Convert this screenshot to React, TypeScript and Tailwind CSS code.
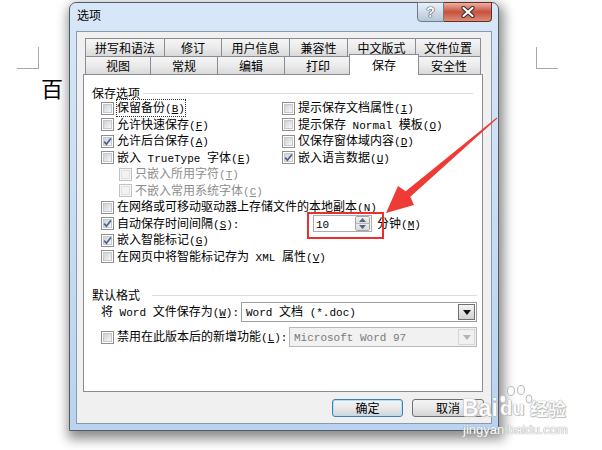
import React from 'react';

const TABS1 = [
  { label: '拼写和语法', w: 'w-[79px]' },
  { label: '修订', w: 'w-[57px]' },
  { label: '用户信息', w: 'w-[68px]' },
  { label: '兼容性', w: 'w-[58px]' },
  { label: '中文版式', w: 'w-[68px]' },
  { label: '文件位置', w: 'w-[66px]' },
];

const TABS2 = [
  { label: '视图', w: 'w-[65px]' },
  { label: '常规', w: 'w-[67px]' },
  { label: '编辑', w: 'w-[67px]' },
  { label: '打印', w: 'w-[67px]' },
  { label: '保存', w: 'w-[66px]', active: true },
  { label: '安全性', w: 'w-[64px]' },
];

// latin runs are monospace half-width in the original dialog font
const M = ({ children }: { children: React.ReactNode }) => (
  <span className="font-['Liberation_Mono',monospace] text-[11px]">{children}</span>
);

const K = ({ c }: { c: string }) => (
  <span className="font-['Liberation_Mono',monospace] text-[11px]">
    (<span className="underline underline-offset-[1px]">{c}</span>)
  </span>
);

function Box({ checked, disabled }: { checked?: boolean; disabled?: boolean }) {
  return (
    <span
      className={`relative flex h-[13px] w-[13px] shrink-0 items-center justify-center border ${
        disabled ? 'border-[#c2c2c2] bg-[#f7f7f7]' : 'border-[#8f8f8f] bg-white'
      }`}
    >
      <span
        className={`h-[9px] w-[9px] border ${
          disabled
            ? 'border-[#e0e0e0] bg-[#f2f2f2]'
            : 'border-[#c5c8cd] bg-linear-to-br from-[#cdd0d5] to-[#f7f7f7]'
        }`}
      />
      {checked && (
        <svg className="absolute inset-0" width="11" height="11" viewBox="0 0 11 11">
          <path d="M2.2 5.6 L4.4 8.2 L8.9 2.4" fill="none" stroke="#4a5e96" strokeWidth="1.7" />
        </svg>
      )}
    </span>
  );
}

function Row({ children }: { children: React.ReactNode }) {
  return <div className="flex h-[16.5px] items-center leading-[14px]">{children}</div>;
}

function Check({
  checked,
  disabled,
  children,
}: {
  checked?: boolean;
  disabled?: boolean;
  children: React.ReactNode;
}) {
  return (
    <div className={`flex items-center gap-[3px] ${disabled ? 'text-[#8d8d8d]' : ''}`}>
      <Box checked={checked} disabled={disabled} />
      <span className="whitespace-nowrap">{children}</span>
    </div>
  );
}

function GroupLabel({ text, line }: { text: string; line: string }) {
  return (
    <div className="flex h-[14px] items-center pl-[8px] leading-[14px]">
      <span>{text}</span>
      <span className={`h-px flex-1 bg-[#d5dfe5] ${line}`} />
    </div>
  );
}

function Spinner() {
  return (
    <div className="flex h-[17px] w-[59px] items-center border border-[#abadb3] bg-white pl-[2px] pr-[1px]">
      <span className="flex-1 leading-[14px]">
        <M>10</M>
      </span>
      <div className="flex h-[15px] w-[15px] flex-col overflow-hidden rounded-[2px] border border-[#a7a7a7]">
        <span className="flex flex-1 items-center justify-center border-b border-[#b9b9b9] bg-linear-to-b from-[#f3f3f3] to-[#dedede]">
          <svg width="7" height="4" viewBox="0 0 7 4">
            <path d="M0 4 L3.5 0 L7 4 Z" fill="#4f6589" />
          </svg>
        </span>
        <span className="flex flex-1 items-center justify-center bg-linear-to-b from-[#ececec] to-[#d8d8d8]">
          <svg width="7" height="4" viewBox="0 0 7 4">
            <path d="M0 0 L3.5 4 L7 0 Z" fill="#4f6589" />
          </svg>
        </span>
      </div>
    </div>
  );
}

function Select({ w, disabled, children }: { w: string; disabled?: boolean; children: React.ReactNode }) {
  return (
    <div
      className={`${w} flex h-[20px] items-center border p-[1px] leading-[14px] ${
        disabled ? 'border-[#b9b9b9] bg-[#f1f1f1] text-[#7a7a7a]' : 'border-[#9c9c9c] bg-white'
      }`}
    >
      <span className="flex-1 whitespace-nowrap pl-[3px]">{children}</span>
      <span
        className={`flex h-full w-[17px] items-center justify-center border ${
          disabled
            ? 'border-[#d6d6d6] bg-[#f1f1f1]'
            : 'border-[#707070] bg-linear-to-b from-[#f4f4f4] to-[#d2d2d2]'
        }`}
      >
        <svg width="8" height="5" viewBox="0 0 8 5">
          <path d="M0 0 L8 0 L4 5 Z" fill={disabled ? '#b4b4b4' : '#111'} />
        </svg>
      </span>
    </div>
  );
}

function Tab({ label, w, last, active }: { label: string; w: string; last?: boolean; active?: boolean }) {
  if (active) {
    return (
      <div className={`${w} relative h-[18px]`}>
        <div className="absolute -left-[2px] -right-[2px] -top-[2px] -bottom-[1px] z-10 flex items-center justify-center border-t border-l border-r border-[#898c95] bg-white leading-[14px]">
          {label}
        </div>
      </div>
    );
  }
  return (
    <div
      className={`${w} flex h-[18px] items-center justify-center border-t border-l border-[#898c95] bg-linear-to-b from-[#f5f5f5] via-[#ebebeb] to-[#d9d9d9] leading-[14px] ${
        last ? 'border-r' : ''
      }`}
    >
      {label}
    </div>
  );
}

function Dialog() {
  return (
    <div className="absolute left-[69px] top-[2px] flex h-[429px] w-[430px] flex-col rounded-t-[7px] border border-[#4f5b68] bg-linear-to-b from-[#d8e7f8] to-[#b9d3f0] px-[6px] pb-[6px] shadow-[2px_5px_12px_3px_rgba(0,0,0,0.45)]">
      {/* title bar */}
      <div className="flex h-[28px] items-start justify-between">
        <span className="mt-[5px] pl-[1px] leading-[14px]">选项</span>
        <div className="-mt-[1px] flex h-[20px]">
          <div className="flex w-[27px] items-center justify-center rounded-bl-[4px] border border-[#6d7c8e] bg-linear-to-b from-[#eaf0f6] via-[#d2dce8] to-[#b7c6d7] font-['Liberation_Sans',sans-serif] text-[14px] font-bold text-white [text-shadow:0_0_1px_#2f3a48,0_0_1px_#2f3a48,0_0_1px_#2f3a48]">
            ?
          </div>
          <div className="flex w-[48px] items-center justify-center rounded-br-[4px] border border-l-0 border-[#6a2b22] bg-linear-to-b from-[#eab0a2] via-[#c7503e] to-[#da8c79]">
            <svg width="14" height="12" viewBox="0 0 14 12">
              <path d="M2.5 2 L11.5 10 M11.5 2 L2.5 10" stroke="#3b2a28" strokeWidth="4.2" strokeLinecap="round" />
              <path d="M2.5 2 L11.5 10 M11.5 2 L2.5 10" stroke="#ffffff" strokeWidth="2.2" strokeLinecap="round" />
            </svg>
          </div>
        </div>
      </div>

      {/* client area */}
      <div className="flex h-[393px] flex-col border border-[#8b9aab] bg-[#f0f0f0] pl-[6px] pt-[6px]">
        <div className="ml-[2px] flex">
          {TABS1.map((t, i) => (
            <Tab key={t.label} label={t.label} w={t.w} last={i === TABS1.length - 1} />
          ))}
        </div>
        <div className="ml-[2px] flex">
          {TABS2.map((t, i) => (
            <Tab key={t.label} label={t.label} w={t.w} active={t.active} last={i === TABS2.length - 1} />
          ))}
        </div>

        <div className="relative flex h-[318px] w-[400px] flex-col border border-[#898c95] bg-white pt-[11px]">
          <GroupLabel text="保存选项" line="ml-[3px] mr-[9px]" />

          <div className="flex flex-col pl-[17px]">
            <Row>
              <div className="w-[181px]">
                <div className="flex items-center gap-[3px]">
                  <Box />
                  <span className="whitespace-nowrap outline-1 outline-dotted outline-[#333] outline-offset-0">
                    保留备份<K c="B" />
                  </span>
                </div>
              </div>
              <Check>
                提示保存文档属性<K c="I" />
              </Check>
            </Row>
            <Row>
              <div className="w-[181px]">
                <Check>
                  允许快速保存<K c="F" />
                </Check>
              </div>
              <Check>
                提示保存<M> Normal </M>模板<K c="O" />
              </Check>
            </Row>
            <Row>
              <div className="w-[181px]">
                <Check checked>
                  允许后台保存<K c="A" />
                </Check>
              </div>
              <Check>
                仅保存窗体域内容<K c="D" />
              </Check>
            </Row>
            <Row>
              <div className="w-[181px]">
                <Check>
                  嵌入<M> TrueType </M>字体<K c="E" />
                </Check>
              </div>
              <Check checked>
                嵌入语言数据<K c="U" />
              </Check>
            </Row>
            <Row>
              <div className="pl-[18px]">
                <Check disabled>
                  只嵌入所用字符<K c="T" />
                </Check>
              </div>
            </Row>
            <Row>
              <div className="pl-[18px]">
                <Check disabled>
                  不嵌入常用系统字体<K c="C" />
                </Check>
              </div>
            </Row>
            <Row>
              <Check>
                在网络或可移动驱动器上存储文件的本地副本<K c="N" />
              </Check>
            </Row>
            <Row>
              <Box checked />
              <span className="ml-[3px] w-[196px] whitespace-nowrap">
                自动保存时间间隔<K c="S" />
                <M>:</M>
              </span>
              <Spinner />
              <span className="ml-[5px] whitespace-nowrap">
                分钟<K c="M" />
              </span>
            </Row>
            <Row>
              <Check checked>
                嵌入智能标记<K c="G" />
              </Check>
            </Row>
            <Row>
              <Check>
                在网页中将智能标记存为<M> XML </M>属性<K c="V" />
              </Check>
            </Row>
          </div>

          <div className="mt-[23px]">
            <GroupLabel text="默认格式" line="ml-[12px] mr-[5px]" />
          </div>

          <div className="flex h-[20px] items-center pl-[17px] leading-[14px]">
            <span className="w-[140px] whitespace-nowrap">
              将<M> Word </M>文件保存为<K c="W" />
              <M>:</M>
            </span>
            <Select w="w-[236px]">
              <M>Word </M>文档<M> (*.doc)</M>
            </Select>
          </div>
          <div className="mt-[5px] flex h-[20px] items-center pl-[17px] leading-[14px]">
            <div className="flex w-[188px] items-center gap-[3px]">
              <Box />
              <span className="whitespace-nowrap">
                禁用在此版本后的新增功能<K c="L" />
                <M>:</M>
              </span>
            </div>
            <Select w="w-[188px]" disabled>
              <M>Microsoft Word 97</M>
            </Select>
          </div>
        </div>

        <div className="mt-[7px] flex justify-end gap-[9px] pr-[7px]">
          <button className="flex h-[18px] w-[71px] items-center justify-center rounded-[3px] border border-[#3c7fb1] bg-linear-to-b from-[#f4f4f4] via-[#e9e9e9] to-[#d3d3d3] leading-none shadow-[inset_0_0_0_1px_#b4def7]">
            确定
          </button>
          <button className="flex h-[18px] w-[72px] items-center justify-center rounded-[3px] border border-[#707070] bg-linear-to-b from-[#f4f4f4] via-[#e9e9e9] to-[#d3d3d3] leading-none">
            取消
          </button>
        </div>
      </div>
    </div>
  );
}

export default function App() {
  return (
    <div className="relative h-[450px] w-[602px] overflow-hidden bg-white font-['Noto_Sans_CJK_SC',sans-serif] text-[12px] text-black">
      {/* document page behind the dialog */}
      <div className="absolute left-[17px] top-[47px] h-[22px] w-[22px] border-b border-r border-[#a8a8a8]" />
      <div className="absolute left-[536px] top-[47px] h-[22px] w-[22px] border-b border-l border-[#a8a8a8]" />
      <div className="absolute left-[41px] top-[76px] text-[22px] leading-[22px]">百</div>

      <Dialog />

      {/* annotation */}
      <div className="absolute left-[307px] top-[212px] h-[27px] w-[77px] border-2 border-[#e8302e]" />
      <svg className="pointer-events-none absolute inset-0" width="602" height="450" viewBox="0 0 602 450">
        <polygon
          points="496.7,117.6 405.7,191.3 398,186 386,213 414,205 410.3,196.7 497.3,118.4"
          fill="#ef3b36"
        />
        <g fill="#fbfbfb" stroke="#b8b8b8" strokeWidth="1">
          <ellipse cx="511" cy="391" rx="3.5" ry="4.5" />
          <ellipse cx="521" cy="390" rx="3.5" ry="4.5" />
          <ellipse cx="503" cy="399" rx="3" ry="4" />
          <ellipse cx="529" cy="399" rx="3" ry="4" />
        </g>
      </svg>

      {/* watermark */}
      <div className="absolute left-[462px] top-[395px] font-['Liberation_Sans',sans-serif] text-[23px] font-bold leading-[26px] text-[#fbfbfb] [text-shadow:0_0_1px_#9a9a9a,0_0_1px_#9a9a9a,1px_1px_1px_#c8c8c8]">
        Bai
      </div>
      <div className="absolute left-[500px] top-[397px] font-['Liberation_Sans',sans-serif] text-[20px] font-bold leading-[22px] text-[#fbfbfb] [text-shadow:0_0_1px_#9a9a9a,0_0_1px_#9a9a9a,1px_1px_1px_#c8c8c8]">
        du
      </div>
      <div className="absolute left-[530px] top-[397px] text-[18px] font-bold leading-[22px] text-[#fbfbfb] [text-shadow:0_0_1px_#9a9a9a,0_0_1px_#9a9a9a,1px_1px_1px_#c8c8c8]">
        经验
      </div>
      <div className="absolute left-[463px] top-[422px] font-['Liberation_Sans',sans-serif] text-[13px] leading-[16px] text-[#fbfbfb] [text-shadow:0_0_1px_#9a9a9a,0_0_1px_#9a9a9a]">
        jingyan.baidu.com
      </div>
    </div>
  );
}
